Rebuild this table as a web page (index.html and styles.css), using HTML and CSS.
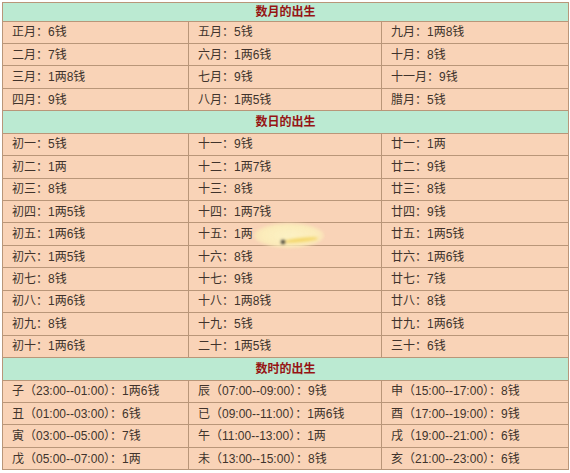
FILE: index.html
```html
<!DOCTYPE html>
<html lang="zh">
<head>
<meta charset="utf-8">
<title>称骨</title>
<link rel="stylesheet" href="styles.css">
</head>
<body>
<div class="wrap">
<table class="tbl">
<colgroup><col class="c1"><col class="c2"><col class="c3"></colgroup>
<tr class="hdr first"><th colspan="3">数月的出生</th></tr>
<tr><td>正月：6钱</td><td>五月：5钱</td><td>九月：1两8钱</td></tr>
<tr><td>二月：7钱</td><td>六月：1两6钱</td><td>十月：8钱</td></tr>
<tr><td>三月：1两8钱</td><td>七月：9钱</td><td>十一月：9钱</td></tr>
<tr><td>四月：9钱</td><td>八月：1两5钱</td><td>腊月：5钱</td></tr>
<tr class="hdr"><th colspan="3">数日的出生</th></tr>
<tr><td>初一：5钱</td><td>十一：9钱</td><td>廿一：1两</td></tr>
<tr><td>初二：1两</td><td>十二：1两7钱</td><td>廿二：9钱</td></tr>
<tr><td>初三：8钱</td><td>十三：8钱</td><td>廿三：8钱</td></tr>
<tr><td>初四：1两5钱</td><td>十四：1两7钱</td><td>廿四：9钱</td></tr>
<tr><td>初五：1两6钱</td><td>十五：1两</td><td>廿五：1两5钱</td></tr>
<tr><td>初六：1两5钱</td><td>十六：8钱</td><td>廿六：1两6钱</td></tr>
<tr><td>初七：8钱</td><td>十七：9钱</td><td>廿七：7钱</td></tr>
<tr><td>初八：1两6钱</td><td>十八：1两8钱</td><td>廿八：8钱</td></tr>
<tr><td>初九：8钱</td><td>十九：5钱</td><td>廿九：1两6钱</td></tr>
<tr><td>初十：1两6钱</td><td>二十：1两5钱</td><td>三十：6钱</td></tr>
<tr class="hdr"><th colspan="3">数时的出生</th></tr>
<tr><td>子（23:00--01:00）：1两6钱</td><td>辰（07:00--09:00）：9钱</td><td>申（15:00--17:00）：8钱</td></tr>
<tr><td>丑（01:00--03:00）：6钱</td><td>已（09:00--11:00）：1两6钱</td><td>酉（17:00--19:00）：9钱</td></tr>
<tr><td>寅（03:00--05:00）：7钱</td><td>午（11:00--13:00）：1两</td><td>戌（19:00--21:00）：6钱</td></tr>
<tr><td>戊（05:00--07:00）：1两</td><td>未（13:00--15:00）：8钱</td><td>亥（21:00--23:00）：6钱</td></tr>
</table>
<div class="smudge"><span class="streak"></span><span class="dot"></span></div>
</div>
</body>
</html>
```

FILE: styles.css
```css
html, body {
  margin: 0;
  padding: 0;
  background: #ffffff;
}
.wrap {
  position: relative;
  padding: 2px 0 0 2px;
  width: 570px;
  height: 473px;
  box-sizing: border-box;
}
.tbl {
  border-collapse: collapse;
  table-layout: fixed;
  width: 566px;
  font-family: "Liberation Sans", "Noto Sans CJK SC", sans-serif;
  font-size: 12px;
  color: #40332c;
  border: 1px solid #a89a8c;
}
.c1 { width: 186px; }
.c2 { width: 193px; }
.c3 { width: 187px; }
.tbl tr { height: 22.45px; }
.tbl tr.first { height: 18.5px; }
.tbl td {
  background: #f9d3b7;
  border: 1px solid #b99679;
  padding: 0 0 0 9px;
  white-space: nowrap;
  line-height: 14px;
  vertical-align: middle;
}
.tbl th {
  background: #bbead2;
  border: 1px solid #b99679;
  color: #961414;
  font-weight: bold;
  font-size: 12px;
  padding: 0;
  line-height: 14px;
  text-align: center;
  vertical-align: middle;
}
.smudge {
  position: absolute;
  left: 254px;
  top: 223px;
  width: 70px;
  height: 25px;
  border-radius: 50%;
  background: radial-gradient(ellipse at 50% 50%, rgba(252, 242, 196, 0.98) 0%, rgba(251, 238, 186, 0.9) 55%, rgba(250, 230, 190, 0) 100%);
  filter: blur(1.5px);
}
.streak {
  position: absolute;
  left: 30px;
  top: 15px;
  width: 34px;
  height: 4px;
  border-radius: 50%;
  background: rgba(242, 210, 90, 0.85);
  transform: rotate(-6deg);
}
.dot {
  position: absolute;
  left: 27px;
  top: 17px;
  width: 4px;
  height: 4px;
  border-radius: 50%;
  background: #111;
}
```
